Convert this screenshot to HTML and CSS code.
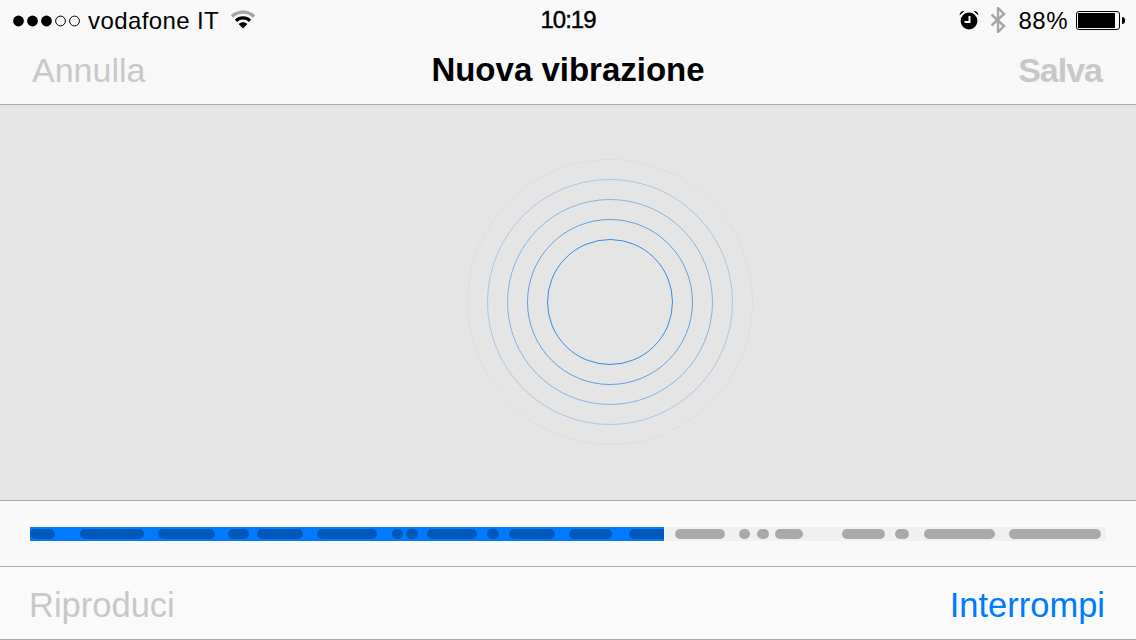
FILE: index.html
```html
<!DOCTYPE html>
<html lang="it">
<head>
    <meta charset="UTF-8">
    <meta name="viewport" content="width=device-width, initial-scale=1.0">
    <title>Nuova vibrazione</title>
    <link rel="stylesheet" href="styles.css">
</head>
<body>
    <div class="statusbar">
        <div class="status-left">
            <svg class="signal" width="68" height="12" viewBox="0 0 68 12">
                <circle cx="5.5" cy="6" r="5.4" fill="#000"/>
                <circle cx="19.5" cy="6" r="5.4" fill="#000"/>
                <circle cx="33.5" cy="6" r="5.4" fill="#000"/>
                <circle cx="47.5" cy="6" r="4.9" fill="none" stroke="#000"/>
                <circle cx="61.5" cy="6" r="4.9" fill="none" stroke="#000"/>
            </svg>
            <span class="carrier">vodafone IT</span>
            <svg class="wifi" width="24" height="19" viewBox="0 0 24 19">
                <path d="M1 6.5C7 .7 17 .7 23 6.5" fill="none" stroke="#a6a6a6" stroke-width="3.4"/>
                <path d="M5 10.8C9 7 15 7 19 10.8" fill="none" stroke="#000" stroke-width="3.2"/>
                <path d="M7.6 14C10.5 11.6 13.5 11.6 16.4 14L12 18.5Z" fill="#000"/>
            </svg>
        </div>
        <div class="clock">10:19</div>
        <div class="status-right">
            <svg class="alarm" width="20" height="20" viewBox="0 0 20 20">
                <circle cx="10" cy="11" r="8.4" fill="#000"/>
                <path d="M.5 5.5C.5 2.5 3 .5 5.5 1ZM19.5 5.5C19.5 2.5 17 .5 14.5 1Z" fill="#000"/>
                <path d="M10.5 6V12H5.5" fill="none" stroke="#f8f8f8" stroke-width="2"/>
            </svg>
            <svg class="bluetooth" width="16" height="26" viewBox="0 0 16 26">
                <path d="M1.5 7.5L14 19L8 25V1L14 7L1.5 18.5" fill="none" stroke="#a6a6a6" stroke-width="2.4"/>
            </svg>
            <span class="percent">88%</span>
            <div class="battery"><div class="battery-level"></div></div>
            <div class="battery-nub"></div>
        </div>
    </div>

    <div class="navbar">
        <span class="nav-button nav-cancel">Annulla</span>
        <span class="nav-title">Nuova vibrazione</span>
        <span class="nav-button nav-save">Salva</span>
    </div>

    <div class="recorder">
        <div class="ring ring-5">
            <div class="ring ring-4">
                <div class="ring ring-3">
                    <div class="ring ring-2">
                        <div class="ring ring-1"></div>
                    </div>
                </div>
            </div>
        </div>
    </div>

    <div class="timeline">
        <div class="track">
            <div class="played">
                <div class="seg" style="margin-left:0;width:25px"></div>
                <div class="seg" style="margin-left:25px;width:64px"></div>
                <div class="seg" style="margin-left:14px;width:57px"></div>
                <div class="seg" style="margin-left:13px;width:21px"></div>
                <div class="seg" style="margin-left:8px;width:46px"></div>
                <div class="seg" style="margin-left:14px;width:60px"></div>
                <div class="seg" style="margin-left:15px;width:11px"></div>
                <div class="seg" style="margin-left:3px;width:12px"></div>
                <div class="seg" style="margin-left:9px;width:50px"></div>
                <div class="seg" style="margin-left:10px;width:12px"></div>
                <div class="seg" style="margin-left:10px;width:46px"></div>
                <div class="seg" style="margin-left:14px;width:43px"></div>
                <div class="seg last" style="margin-left:17px;width:35px"></div>
            </div>
            <div class="remaining">
                <div class="seg" style="margin-left:11px;width:50px"></div>
                <div class="seg" style="margin-left:14px;width:11px"></div>
                <div class="seg" style="margin-left:7px;width:12px"></div>
                <div class="seg" style="margin-left:6px;width:28px"></div>
                <div class="seg" style="margin-left:39px;width:43px"></div>
                <div class="seg" style="margin-left:10px;width:14px"></div>
                <div class="seg" style="margin-left:15px;width:71px"></div>
                <div class="seg" style="margin-left:14px;width:92px"></div>
            </div>
        </div>
    </div>

    <div class="toolbar">
        <span class="tool-button">Riproduci</span>
        <span class="tool-button active">Interrompi</span>
    </div>
</body>
</html>
```

FILE: styles.css
```css
* {
    box-sizing: border-box;
}
html, body {
    margin: 0;
    height: 100%;
}
body {
    width: 1136px;
    height: 640px;
    overflow: hidden;
    display: flex;
    flex-direction: column;
    font-family: "Liberation Sans", Arial, sans-serif;
    background-color: #f9f9f9;
    color: #000;
}
.statusbar {
    height: 40px;
    position: relative;
    display: flex;
    justify-content: space-between;
    align-items: center;
    padding: 1px 11px 0 13px;
    font-size: 24px;
    background-color: #f8f8f8;
}
.status-left, .status-right {
    display: flex;
    align-items: center;
}
.carrier {
    margin-left: 7px;
    letter-spacing: 0.4px;
}
.wifi {
    margin-left: 12px;
    margin-bottom: 2px;
}
.clock {
    position: absolute;
    left: 0;
    right: 0;
    padding-bottom: 1px;
    text-align: center;
    letter-spacing: -1px;
    -webkit-text-stroke: 0.4px #000;
}
.alarm {
    margin-bottom: 2px;
}
.bluetooth {
    margin-left: 11px;
    margin-bottom: 1px;
}
.percent {
    margin-left: 12px;
    letter-spacing: 0.5px;
}
.battery {
    width: 44px;
    height: 19px;
    margin-left: 8px;
    margin-bottom: 1px;
    padding: 1px;
    border: 1px solid #000;
    border-radius: 3px;
}
.battery-level {
    width: 37px;
    height: 100%;
    background-color: #000;
}
.battery-nub {
    width: 3px;
    height: 7px;
    margin-left: 2px;
    background-color: #000;
    border-radius: 0 3px 3px 0;
}
.navbar {
    height: 65px;
    display: grid;
    grid-template-columns: 1fr auto 1fr;
    align-items: center;
    padding: 0 34px 4px 34px;
    border-bottom: 1px solid #a9a9a9;
    background-color: #f8f8f8;
}
.nav-button {
    font-size: 34px;
    color: #c8c8c8;
}
.nav-cancel {
    margin-left: -2px;
}
.nav-save {
    text-align: right;
    font-weight: bold;
    letter-spacing: -1px;
}
.nav-title {
    font-size: 33px;
    font-weight: bold;
}
.recorder {
    height: 395px;
    display: flex;
    justify-content: center;
    align-items: center;
    padding: 0 0 2px 84px;
    background-color: #e5e5e5;
}
.ring {
    display: flex;
    justify-content: center;
    align-items: center;
    border-radius: 50%;
    border-style: solid;
    border-width: 1px;
}
.ring-1 {
    width: 126px;
    height: 126px;
    border-color: #3d8be0;
}
.ring-2 {
    width: 166px;
    height: 166px;
    border-color: #62a0e2;
}
.ring-3 {
    width: 206px;
    height: 206px;
    border-color: #86b4e4;
}
.ring-4 {
    width: 246px;
    height: 246px;
    border-color: #aac7e4;
}
.ring-5 {
    width: 286px;
    height: 286px;
    border-color: #d9dfe6;
}
.timeline {
    height: 67px;
    padding: 26px 30px 0;
    border-top: 1px solid #a9a9a9;
    border-bottom: 1px solid #a9a9a9;
}
.track {
    width: 1076px;
    height: 14px;
    display: flex;
    background-color: #f0f0f0;
}
.played, .remaining {
    display: flex;
    align-items: center;
    overflow: hidden;
}
.played {
    width: 634px;
    background-color: #007aff;
}
.seg {
    height: 10px;
    flex-shrink: 0;
    border-radius: 5px;
    background-color: #a9a9a9;
}
.played .seg {
    background-color: #0059b9;
}
.last {
    border-radius: 5px 0 0 5px;
}
.toolbar {
    height: 73px;
    display: flex;
    justify-content: space-between;
    align-items: center;
    padding: 4px 31px 0 29px;
    border-bottom: 1px solid #a9a9a9;
    background-color: #fafafa;
}
.tool-button {
    font-size: 34.5px;
    color: #c8c8c8;
}
.active {
    color: #007aff;
}
```
